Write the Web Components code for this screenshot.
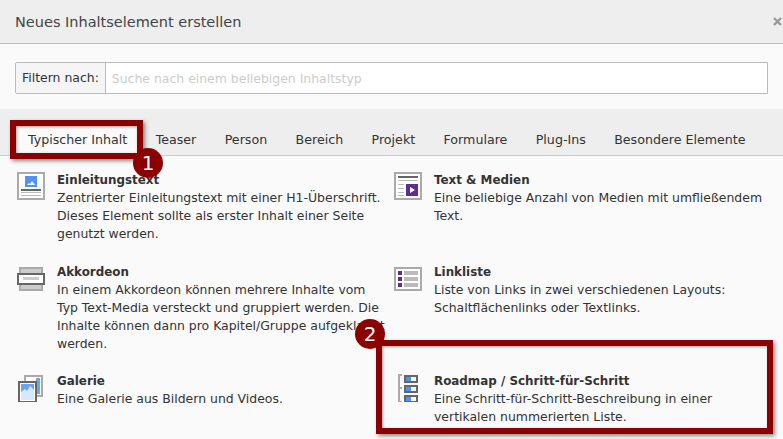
<!DOCTYPE html>
<html lang="de">
<head>
<meta charset="utf-8">
<title>Neues Inhaltselement erstellen</title>
<style>
  html, body { margin: 0; height: 439px; overflow: hidden; }
  body { position: relative; background: #fafafa; color: #333; font: 12.45px/18px "DejaVu Sans", Verdana, sans-serif; }
</style>
</head>
<body>
<modal-header>Neues Inhaltselement erstellen</modal-header>
<filter-bar label="Filtern nach:" placeholder="Suche nach einem beliebigen Inhaltstyp"></filter-bar>
<tab-bar>
  <tab-item active>Typischer Inhalt</tab-item>
  <tab-item>Teaser</tab-item>
  <tab-item>Person</tab-item>
  <tab-item>Bereich</tab-item>
  <tab-item>Projekt</tab-item>
  <tab-item>Formulare</tab-item>
  <tab-item>Plug-Ins</tab-item>
  <tab-item>Besondere Elemente</tab-item>
</tab-bar>
<element-grid>
  <element-card heading="Einleitungstext">
    <svg slot="icon" width="30" height="30" viewBox="0 0 30 30">
      <rect x="2" y="2" width="26" height="26" fill="#fff" stroke="#aaa" stroke-width="2"/>
      <rect x="9" y="5" width="12" height="11" fill="#4d94f5"/>
      <path d="M11 14l2-2 1 1 2-3 3 4z" fill="#fff"/>
      <rect x="5" y="18" width="20" height="2" fill="#666"/>
      <rect x="5" y="21" width="20" height="1" fill="#bbb"/>
      <rect x="5" y="24" width="20" height="1" fill="#bbb"/>
    </svg>
    Zentrierter Einleitungstext mit einer H1-Überschrift.<br>Dieses Element sollte als erster Inhalt einer Seite<br>genutzt werden.
  </element-card>
  <element-card heading="Text &amp; Medien">
    <svg slot="icon" width="30" height="30" viewBox="0 0 30 30">
      <rect x="2" y="2" width="26" height="26" fill="#fff" stroke="#aaa" stroke-width="2"/>
      <rect x="5" y="5" width="20" height="2" fill="#666"/>
      <rect x="5" y="9" width="20" height="1" fill="#bbb"/>
      <path d="M5 13.5h6M5 17.5h6M5 21.5h6M5 24.5h6" stroke="#bbb"/>
      <rect x="13" y="13" width="12" height="12" fill="#5f2d91"/>
      <path d="M17 16l5 3-5 3z" fill="#fff"/>
    </svg>
    Eine beliebige Anzahl von Medien mit umfließendem<br>Text.
  </element-card>
  <element-card heading="Akkordeon">
    <svg slot="icon" width="30" height="30" viewBox="0 0 30 30">
      <rect x="4" y="5" width="22" height="22" fill="#ccc" stroke="#aaa" stroke-width="2"/>
      <rect x="2" y="11" width="26" height="10" fill="#fff" stroke="#666" stroke-width="2"/>
      <rect x="7" y="14" width="16" height="3" fill="#ccc"/>
    </svg>
    In einem Akkordeon können mehrere Inhalte vom<br>Typ Text-Media versteckt und gruppiert werden. Die<br>Inhalte können dann pro Kapitel/Gruppe aufgeklappt<br>werden.
  </element-card>
  <element-card heading="Linkliste">
    <svg slot="icon" width="30" height="30" viewBox="0 0 30 30">
      <rect x="2" y="5" width="26" height="22" fill="#fff" stroke="#aaa" stroke-width="2"/>
      <path d="M5 8h4v4H5zM5 14h4v4H5zM5 20h4v4H5z" fill="#5f2d91"/>
      <path d="M11 8h14v4H11zM11 14h14v4H11zM11 20h14v4H11z" fill="#bbb"/>
    </svg>
    Liste von Links in zwei verschiedenen Layouts:<br>Schaltflächenlinks oder Textlinks.
  </element-card>
  <element-card heading="Galerie">
    <svg slot="icon" width="30" height="30" viewBox="0 0 30 30">
      <rect x="9" y="4" width="17" height="20" fill="#fff" stroke="#aaa" stroke-width="2"/>
      <rect x="20" y="6" width="4" height="16" fill="#6aa6f8"/>
      <rect x="3" y="10" width="17" height="20" fill="#fff" stroke="#666" stroke-width="2"/>
      <rect x="5" y="12" width="13" height="16" fill="#6aa6f8"/>
      <path d="M5 20l4-3 2 2 3-5 4 4v10H5z" fill="#d7e7fd"/>
    </svg>
    Eine Galerie aus Bildern und Videos.
  </element-card>
  <element-card heading="Roadmap / Schritt-für-Schritt">
    <svg slot="icon" width="30" height="30" viewBox="0 0 30 30">
      <path d="M5 2h2v29H5zM7 2h2v2H7zM7 15h2v2H7zM7 29h2v2H7z" fill="#aaa"/>
      <g fill="#fff" stroke="#666" stroke-width="2">
        <rect x="12" y="4" width="12" height="6"/>
        <rect x="12" y="14" width="12" height="6"/>
        <rect x="12" y="24" width="12" height="6"/>
      </g>
      <path d="M13 5h5v4h-5zM13 15h5v4h-5zM13 25h5v4h-5z" fill="#4d94f5"/>
    </svg>
    Eine Schritt-für-Schritt-Beschreibung in einer<br>vertikalen nummerierten Liste.
  </element-card>
</element-grid>
<call-out number="1" style="left:10px;top:120px;width:133px;height:39px" badge-x="117" badge-y="22"></call-out>
<call-out number="2" style="left:376px;top:340px;width:397px;height:94px" badge-x="-27" badge-y="-27"></call-out>

<script>
class ModalHeader extends HTMLElement {
  constructor() {
    super();
    this.attachShadow({ mode: 'open' });
    this.shadowRoot.innerHTML = `
      <style>
        :host { display: flex; align-items: center; justify-content: space-between; box-sizing: border-box; height: 44px; padding: 0 0 0 15px; background: #eee; border-bottom: 1px solid #bbb; font-size: 14.5px; color: #444; }
        svg { display: block; margin-right: 1px; }
      </style>
      <slot></slot>
      <svg width="9" height="9" viewBox="0 0 9 9"><path d="M1 1l7 7M8 1L1 8" stroke="#999" stroke-width="2.4"/></svg>`;
  }
}
class FilterBar extends HTMLElement {
  constructor() {
    super();
    this.attachShadow({ mode: 'open' });
    this.shadowRoot.innerHTML = `
      <style>
        :host { display: block; padding: 18px 15px 15px; }
        .group { display: flex; height: 32px; box-sizing: border-box; border: 1px solid #bbb; border-radius: 2px 0 0 2px; background: #fff; }
        .label { display: flex; align-items: center; padding: 0 6px; background: #f5f5f5; border-right: 1px solid #bbb; font-size: 12.45px; color: #333; white-space: nowrap; }
        input { flex: 1; min-width: 0; border: 0; outline: 0; padding: 0 6px; font: 12.45px "DejaVu Sans", Verdana, sans-serif; background: #fff; }
        input::placeholder { color: #ccc; opacity: 1; }
      </style>
      <div class="group">
        <span class="label"></span>
        <input type="text">
      </div>`;
  }
  connectedCallback() {
    this.shadowRoot.querySelector('.label').textContent = this.getAttribute('label');
    this.shadowRoot.querySelector('input').placeholder = this.getAttribute('placeholder');
  }
}
class TabBar extends HTMLElement {
  constructor() {
    super();
    this.attachShadow({ mode: 'open' });
    this.shadowRoot.innerHTML = `
      <style>
        :host { display: flex; align-items: flex-end; box-sizing: border-box; height: 47px; padding: 0 13px 0 14px; background: #eee; border-bottom: 1px solid #ccc; }
      </style>
      <slot></slot>`;
  }
}
class TabItem extends HTMLElement {
  constructor() {
    super();
    this.attachShadow({ mode: 'open' });
    this.shadowRoot.innerHTML = `
      <style>
        :host { display: block; box-sizing: border-box; height: 30px; padding: 0 14.2px 0 14px; line-height: 29px; font-size: 12.65px; color: #333; white-space: nowrap; }
        :host(:not([active])) { padding-left: 14.2px; }
        :host([active]) { background: #fafafa; }
      </style>
      <slot></slot>`;
  }
}
class ElementGrid extends HTMLElement {
  constructor() {
    super();
    this.attachShadow({ mode: 'open' });
    this.shadowRoot.innerHTML = `
      <style>
        :host { display: grid; grid-template-columns: 377px 1fr; grid-template-rows: 92px 109px auto; padding: 15px 0 0 16px; }
      </style>
      <slot></slot>`;
  }
}
class ElementCard extends HTMLElement {
  constructor() {
    super();
    this.attachShadow({ mode: 'open' });
    this.shadowRoot.innerHTML = `
      <style>
        :host { display: flex; gap: 10px; }
        .icon { flex: none; width: 31px; }
        .icon ::slotted(svg) { display: block; }
        .heading { font-weight: bold; font-size: 11.9px; color: #333; }
        .text { white-space: nowrap; }
      </style>
      <div class="icon"><slot name="icon"></slot></div>
      <div class="text"><div class="heading"></div><slot></slot></div>`;
  }
  connectedCallback() {
    this.shadowRoot.querySelector('.heading').textContent = this.getAttribute('heading');
  }
}
class CallOut extends HTMLElement {
  constructor() {
    super();
    this.attachShadow({ mode: 'open' });
    this.shadowRoot.innerHTML = `
      <style>
        :host { position: absolute; box-sizing: border-box; border: 6px solid #8b0000; box-shadow: 2px 2px 4px rgba(0,0,0,.45), inset 1px 1px 3px rgba(0,0,0,.35); }
        .badge { position: absolute; width: 30px; height: 30px; border-radius: 50%; background: #8b0000; color: #fff; font-size: 20px; line-height: 30px; text-align: center; }
      </style>
      <div class="badge"></div>`;
  }
  connectedCallback() {
    const badge = this.shadowRoot.querySelector('.badge');
    badge.textContent = this.getAttribute('number');
    badge.style.left = this.getAttribute('badge-x') + 'px';
    badge.style.top = this.getAttribute('badge-y') + 'px';
  }
}
customElements.define('modal-header', ModalHeader);
customElements.define('filter-bar', FilterBar);
customElements.define('tab-bar', TabBar);
customElements.define('tab-item', TabItem);
customElements.define('element-grid', ElementGrid);
customElements.define('element-card', ElementCard);
customElements.define('call-out', CallOut);
</script>
</body>
</html>
